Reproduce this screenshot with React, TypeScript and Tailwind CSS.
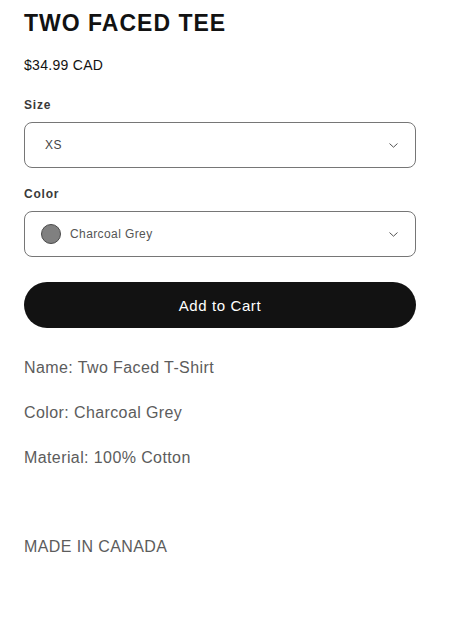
import React from "react";

function Chevron() {
  return (
    <svg width="9" height="5" viewBox="0 0 9 5" fill="none" className="shrink-0">
      <path d="M0.8 0.8l3.7 3.4 3.7-3.4" stroke="#555" strokeWidth="1" strokeLinecap="round" strokeLinejoin="round" />
    </svg>
  );
}

function Label({ text, className = "" }: { text: string; className?: string }) {
  return (
    <div className={`text-[12px] font-bold leading-[16px] tracking-[0.8px] text-[#3a3a3a] ${className}`}>{text}</div>
  );
}

export default function App() {
  const details = ["Name: Two Faced T-Shirt", "Color: Charcoal Grey", "Material: 100% Cotton"];

  return (
    <div className="min-h-screen bg-white px-6 pt-[8px] font-['Liberation_Sans',Arial,sans-serif] text-[#121212]">
      <div className="w-[392px]">
        <h1 className="text-[23px] font-bold leading-[30px] tracking-[1px] text-[#121212]">TWO FACED TEE</h1>
        <div className="mt-[17px] text-[14px] leading-[20px] tracking-[0.3px] text-[#121212]">$34.99 CAD</div>

        <Label text="Size" className="mt-[22px]" />
        <div className="mt-[9px] flex h-[46px] items-center justify-between rounded-[8px] border border-[#767676] pl-5 pr-[17px]">
          <span className="text-[12px] tracking-[0.4px] text-[#444]">XS</span>
          <Chevron />
        </div>

        <Label text="Color" className="mt-[18px]" />
        <div className="mt-[9px] flex h-[46px] items-center justify-between rounded-[8px] border border-[#767676] pl-4 pr-[17px]">
          <div className="flex items-center gap-[9px]">
            <span className="h-[20px] w-[20px] rounded-full border border-[#4a4a4a] bg-[#808080]" />
            <span className="text-[12px] tracking-[0.4px] text-[#555]">Charcoal Grey</span>
          </div>
          <Chevron />
        </div>

        <button className="mt-[25px] flex h-[46px] w-full items-center justify-center rounded-full bg-[#121212] pt-[2px] text-[15px] tracking-[0.6px] text-white">
          Add to Cart
        </button>

        <div className="mt-[28px] flex flex-col gap-[21px] text-[16px] leading-[24px] tracking-[0.4px] text-[#5c5c5c]">
          {details.map((d) => (
            <p key={d}>{d}</p>
          ))}
        </div>
        <p className="mt-[65px] text-[16px] leading-[24px] tracking-[0.4px] text-[#5c5c5c]">MADE IN CANADA</p>
      </div>
    </div>
  );
}
